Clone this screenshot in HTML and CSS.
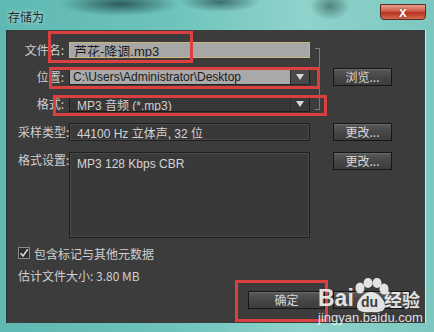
FILE: index.html
```html
<!DOCTYPE html>
<html lang="zh">
<head>
<meta charset="utf-8">
<title>存储为</title>
<link rel="stylesheet" href="styles.css">
</head>
<body>
<div class="window">
  <div class="titlebar">
    <span class="title">存储为</span>
    <button class="close" aria-label="关闭">x</button>
  </div>
  <div class="panel">
    <div class="form">
      <label class="lbl">文件名:</label>
      <div class="field input-light">芦花-降调.mp3</div>
      <div></div>

      <label class="lbl">位置:</label>
      <div class="field select-light"><span class="val">C:\Users\Administrator\Desktop</span><span class="arrow"><i></i></span></div>
      <button class="btn">浏览...</button>

      <label class="lbl">格式:</label>
      <div class="field select-dark"><span class="val">MP3 音频 (*.mp3)</span><span class="arrow"><i></i></span></div>
      <div></div>

      <label class="lbl">采样类型:</label>
      <div class="field box-dark">44100 Hz 立体声, 32 位</div>
      <button class="btn">更改...</button>

      <label class="lbl top">格式设置:</label>
      <div class="field box-dark area">MP3 128 Kbps CBR</div>
      <button class="btn top">更改...</button>
    </div>

    <div class="check-row">
      <span class="checkbox"><svg width="10" height="10" viewBox="0 0 10 10"><path d="M1.5 5.2 L4 8 L8.8 1.2" fill="none" stroke="#d8d8d8" stroke-width="1.6"/></svg></span>
      <span>包含标记与其他元数据</span>
    </div>
    <div class="estimate">估计文件大小: 3.80 MB</div>

    <div class="actions">
      <button class="btn wide">确定</button>
      <button class="btn wide" aria-label="取消"></button>
    </div>
  </div>
</div>

<div class="bracket"></div>
<div class="mark m1"></div>
<div class="mark m2"></div>
<div class="mark m3"></div>
<div class="mark m4"></div>

<div class="watermark">
  <span class="bai">Bai</span>
  <span class="paw">
    <svg width="40" height="36" viewBox="0 0 40 36">
      <g fill="rgba(255,255,255,0.85)">
        <ellipse cx="9" cy="10" rx="4.5" ry="5.5"/>
        <ellipse cx="17" cy="5" rx="4.5" ry="5"/>
        <ellipse cx="26" cy="5" rx="4.5" ry="5"/>
        <ellipse cx="33" cy="11" rx="4.5" ry="5.5"/>
        <path d="M20 14 C13 14 6 22 6 28 C6 33 11 35 20 34 C29 35 34 33 34 28 C34 22 27 14 20 14 Z"/>
      </g>
    </svg>
    <span class="du">du</span>
  </span>
  <span class="jy">经验</span>
  <span class="url">jingyan.baidu.com</span>
</div>
</body>
</html>
```

FILE: styles.css
```css
html, body {
  margin: 0;
  padding: 0;
}
body {
  width: 434px;
  height: 332px;
  overflow: hidden;
  position: relative;
  font-family: "Liberation Sans", "Noto Sans CJK SC", sans-serif;
  font-size: 12px;
  background:
    radial-gradient(ellipse 60px 12px at 120px 4px, rgba(20,50,50,0.7), rgba(20,50,50,0) 100%),
    radial-gradient(ellipse 40px 10px at 220px 2px, rgba(20,50,50,0.6), rgba(20,50,50,0) 100%),
    radial-gradient(ellipse 20px 14px at 330px 6px, rgba(20,50,50,0.5), rgba(20,50,50,0) 100%),
    linear-gradient(90deg, #5fb8b2 0%, #6ec4bc 40%, #8fd3cb 70%, #7cc8c0 100%);
}
.window {
  display: flex;
  flex-direction: column;
  height: 332px;
}
.titlebar {
  height: 30px;
  display: flex;
  align-items: flex-start;
  justify-content: space-between;
  padding: 0 8px 0 8px;
  box-sizing: border-box;
}
.title {
  margin-top: 8px;
  font-family: "Noto Sans CJK SC", sans-serif;
  font-size: 12px;
  color: #1e2b2b;
  text-shadow: 0 0 4px rgba(255,255,255,0.8);
}
.close {
  margin-top: 4px;
  width: 46px;
  height: 16px;
  padding: 0;
  border: 1px solid #5a2a24;
  border-radius: 0 0 4px 4px;
  background: linear-gradient(#e6a08e 0%, #cf5a45 45%, #b8331f 55%, #d66a50 100%);
  color: #fff;
  font-family: "Liberation Sans", sans-serif;
  font-weight: bold;
  font-size: 14px;
  line-height: 12px;
  text-shadow: 0 0 2px #6a1a10;
}
.panel {
  margin: 0 9px 0 8px;
  height: 293px;
  background: #3d3c3d;
  box-shadow: -2px 0 0 #2a3b3b, 1px 0 0 #cfe9e5;
  padding: 12px 0 0 10px;
  box-sizing: border-box;
  color: #cfcfcf;
  font-family: "Liberation Sans", "Noto Sans CJK SC", sans-serif;
}
.form {
  display: grid;
  grid-template-columns: 46px 241px 77px;
  grid-template-rows: 16px 16px 16px 18px 86px;
  column-gap: 5px;
  row-gap: 11px;
}
.lbl {
  text-align: right;
  align-self: center;
  font-family: "Noto Sans CJK SC", sans-serif;
  font-size: 12px;
  line-height: 16px;
  color: #cfcfcf;
  white-space: nowrap;
}
.lbl.top { align-self: start; margin-top: 0; }
.field {
  box-sizing: border-box;
  display: flex;
  align-items: center;
  font-size: 12px;
  white-space: nowrap;
  overflow: hidden;
  font-family: "Liberation Sans", "Noto Sans CJK SC", sans-serif;
}
.input-light {
  background: #a7a7a7;
  border: 1px solid #cdb67a;
  color: #1c1c1c;
  padding-left: 4px;
  font-size: 13px;
}
.select-light {
  background: #a9a9a9;
  border: 1px solid #222;
  color: #1c1c1c;
  padding-left: 3px;
}
.select-dark {
  background: #383738;
  border: 1px solid #1e1e1e;
  color: #cfcfcf;
  padding-left: 7px;
}
.val { flex: 1; }
.arrow {
  width: 18px;
  align-self: stretch;
  background: #4a494a;
  border-left: 1px solid #2a2a2a;
  display: flex;
  align-items: center;
  justify-content: center;
}
.select-dark .arrow { background: #3a393a; }
.arrow i {
  width: 0;
  height: 0;
  border-left: 4px solid transparent;
  border-right: 4px solid transparent;
  border-top: 6px solid #d8d8d8;
}
.box-dark {
  background: #3a393a;
  border: 1px solid #1f1f1f;
  box-shadow: inset 0 0 0 1px #4a494a;
  color: #d4d4d4;
  padding-left: 7px;
}
.area {
  align-items: flex-start;
  padding-top: 4px;
}
.btn {
  box-sizing: border-box;
  margin-left: 18px;
  height: 18px;
  padding: 0;
  border: 1px solid #161616;
  background: linear-gradient(#5a595a, #474647 50%, #3e3d3e);
  box-shadow: inset 0 1px 0 #6a696a;
  color: #d6d6d6;
  font-family: "Noto Sans CJK SC", sans-serif;
  font-size: 12px;
  line-height: 16px;
  align-self: center;
}
.btn.top { align-self: start; }
.check-row {
  margin-top: 8px;
  display: flex;
  align-items: center;
  gap: 4px;
  height: 14px;
  font-family: "Noto Sans CJK SC", sans-serif;
  color: #d0d0d0;
}
.checkbox {
  width: 12px;
  height: 12px;
  box-sizing: border-box;
  border: 1px solid #8a8a8a;
  background: #2e2d2e;
  display: flex;
  align-items: center;
  justify-content: center;
}
.estimate {
  margin-top: 9px;
  font-family: "Noto Sans CJK SC", sans-serif;
  color: #cfcfcf;
  height: 14px;
  line-height: 14px;
}
.actions {
  margin-top: 8px;
  display: flex;
  justify-content: flex-end;
  gap: 8px;
  padding-right: 15px;
}
.btn.wide {
  margin-left: 0;
  width: 77px;
}
.bracket {
  position: absolute;
  left: 315px;
  top: 48px;
  width: 4px;
  height: 60px;
  border: 1px solid #7a7a7a;
  border-left: none;
}
.mark {
  position: absolute;
  border: 3px solid #d9403f;
  box-sizing: border-box;
}
.m1 { left: 48px; top: 31px; width: 145px; height: 32px; }
.m2 { left: 49px; top: 67px; width: 271px; height: 22px; }
.m3 { left: 53px; top: 95px; width: 274px; height: 21px; }
.m4 { left: 235px; top: 280px; width: 93px; height: 42px; }
.watermark {
  position: absolute;
  left: 318px;
  top: 278px;
  width: 110px;
  height: 46px;
  color: rgba(255,255,255,0.85);
}
.bai {
  position: absolute;
  left: 0;
  top: 8px;
  font-family: "Liberation Sans", sans-serif;
  font-weight: bold;
  font-size: 23px;
  line-height: 24px;
}
.paw {
  position: absolute;
  left: 33px;
  top: 0;
  width: 40px;
  height: 36px;
}
.paw svg { display: block; }
.du {
  position: absolute;
  left: 10px;
  top: 16px;
  font-family: "Liberation Sans", sans-serif;
  font-weight: bold;
  font-size: 14px;
  line-height: 16px;
  color: #3d3c3d;
}
.jy {
  position: absolute;
  left: 66px;
  top: 11px;
  font-family: "Noto Sans CJK SC", sans-serif;
  font-weight: bold;
  font-size: 18px;
  line-height: 20px;
}
.url {
  position: absolute;
  left: 0;
  top: 33px;
  font-family: "Liberation Sans", sans-serif;
  font-size: 13px;
  line-height: 13px;
}
```
